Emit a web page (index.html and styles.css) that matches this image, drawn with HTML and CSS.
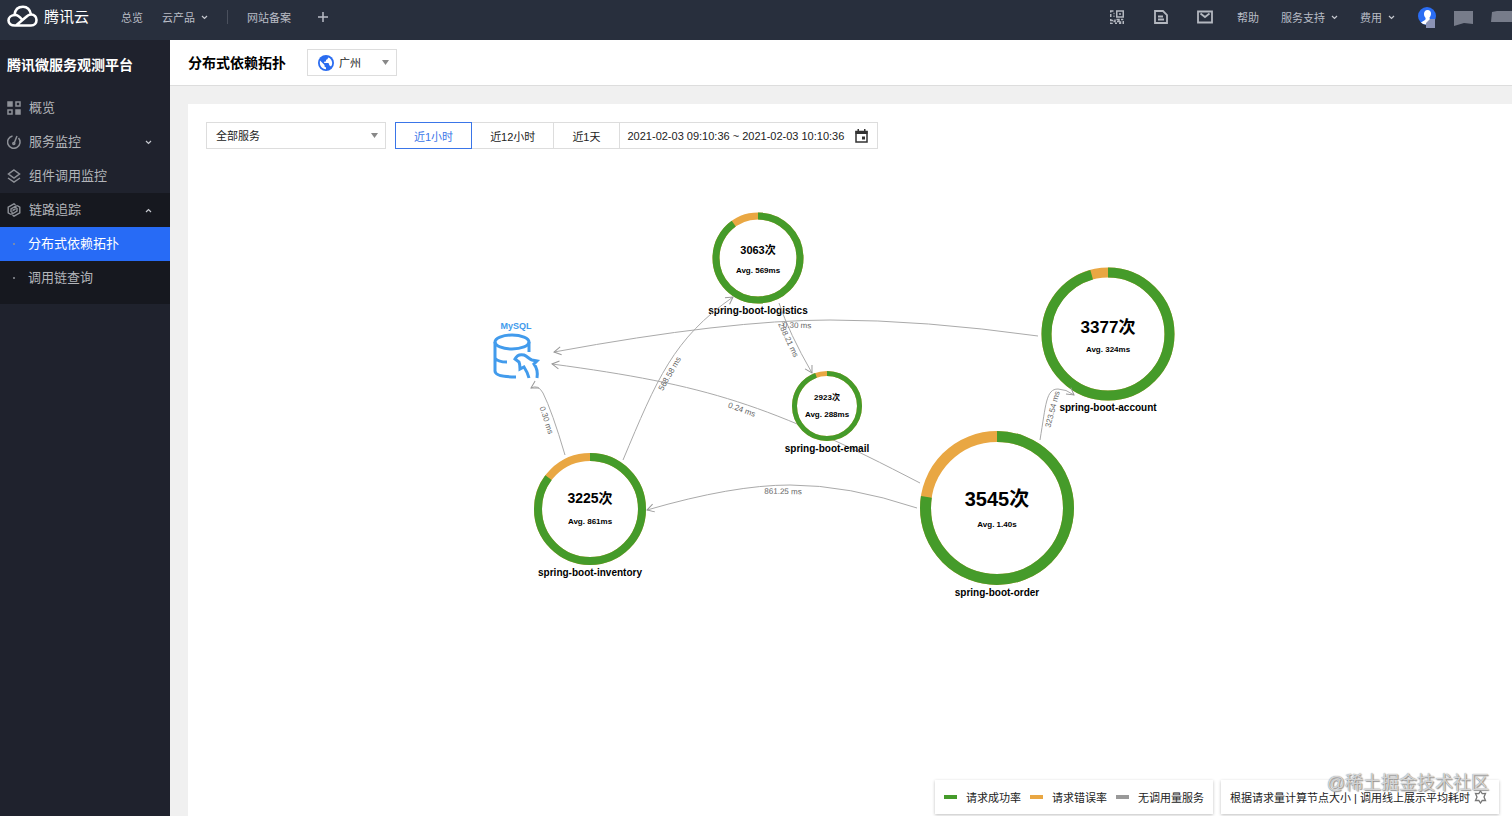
FILE: index.html
```
<!DOCTYPE html>
<html lang="zh-CN">
  <head>
    <meta charset="UTF-8" />
    <meta name="viewport" content="width=device-width, initial-scale=1.0" />
    <title>分布式依赖拓扑</title>
    <link rel="stylesheet" href="styles.css" />
  </head>
  <body>
    <header class="topbar">
      <a href="#" class="logo">
        <svg width="31" height="24" viewBox="0 0 31 24" fill="none" stroke="#fff" stroke-width="2.600">
          <path d="M15 14.500C12 11 10.500 10 8.500 10 4 10 1.500 12.500 1.500 15.500s2.500 5 6.500 5h16c3.500 0 5.500-2.500 5.500-5.500s-2-5.500-5.500-5.500c-2 0-3.500 1-5 2.500L9 20.500" />
          <path d="M7.500 10C8 5 11 1.700 16 1.700c4 0 7 2.500 8 7.800" />
        </svg>
        <span>腾讯云</span>
      </a>
      <nav class="topnav">
        <a href="#">总览</a>
        <a href="#">云产品
          <svg class="caret" width="7" height="5" viewBox="0 0 7 5"><path d="M1 1l2.500 2.500L6 1" /></svg>
        </a>
        <span class="divider"></span>
        <a href="#">网站备案</a>
        <button class="plus" aria-label="添加">
          <svg width="10" height="10" viewBox="0 0 10 10"><path d="M5 0v10M0 5h10" /></svg>
        </button>
      </nav>
      <div class="tools">
        <button aria-label="二维码">
          <svg width="14" height="14" viewBox="0 0 14 14" fill="none" stroke="#b4b8c0" stroke-width="1.500">
            <path d="M6.750 1h6.500v6h-6.500zM9 4h2M3.500 1H.75v1.500M.75 4v3M3.500 6.250h1M3.500 3.500h1M.75 9v1.500h2.500M.75 12.500v1h2M5 9.500v2H3.500M6.500 9.500h2.500v2h-2M5 13.250h2M9 13.250h1.500v-2M11 9.500h2.250M13.250 11v3" />
          </svg>
        </button>
        <button aria-label="文档">
          <svg width="14" height="14" viewBox="0 0 14 14" fill="none" stroke="#b4b8c0" stroke-width="1.800">
            <path d="M1 1h8l4 4v8H1zM4 6.500h5M4 9.500h6" />
          </svg>
        </button>
        <button aria-label="消息">
          <svg width="16" height="14" viewBox="0 0 16 14" fill="none" stroke="#b4b8c0" stroke-width="1.800">
            <path d="M1 1.500h14v11H1zM3.500 3.500L8 7l4.500-3.500" />
          </svg>
        </button>
        <a href="#" class="help">帮助</a>
        <a href="#">服务支持
          <svg class="caret" width="7" height="5" viewBox="0 0 7 5"><path d="M1 1l2.500 2.500L6 1" /></svg>
        </a>
        <a href="#">费用
          <svg class="caret" width="7" height="5" viewBox="0 0 7 5"><path d="M1 1l2.500 2.500L6 1" /></svg>
        </a>
        <button aria-label="账号">
          <svg width="20" height="22" viewBox="0 0 20 22">
            <circle cx="10" cy="10" r="9" fill="#2b6df3" />
            <path d="M10.500 4c2.500 0 3.700 1.800 3.500 4-.2 1.800-1 2.800-1.500 3.500L13 14l-4 4.500c-2 0-4-.8-5-2l4-2.500c.8-.5.8-1.500.3-2.500C7.500 10.500 7 9.500 7 8c0-2.200 1.200-4 3.500-4z" fill="#fff" />
            <path d="M9 17l4-4h5v9H9z" fill="#8b93b5" />
          </svg>
        </button>
        <svg class="mask" width="20" height="17" viewBox="0 0 20 17"><path d="M0 2h19v13l-9-1-10 3z" /></svg>
        <svg class="mask" width="21" height="14" viewBox="0 0 21 14"><path d="M1 2l5-1h15v11H0z" /></svg>
      </div>
    </header>

    <div class="layout">
      <aside class="sidebar">
        <h2>腾讯微服务观测平台</h2>
        <nav>
          <a href="#" class="item">
            <svg width="14" height="14" viewBox="0 0 14 14" fill="none" stroke="#8e9198" stroke-width="1.500">
              <path d="M1 1h4v4H1zM9 9h4v4H9z" fill="#8e9198" /><path d="M9 1h4v4H9zM1 9h4v4H1z" />
            </svg>
            <span>概览</span>
          </a>
          <button class="item">
            <svg width="14" height="14" viewBox="0 0 14 14" fill="none" stroke="#8e9198" stroke-width="1.500">
              <path d="M5.500 1A6.200 6.200 0 1 0 11.500 3" /><path d="M10 1L7 8.500" /><circle cx="6.800" cy="8.500" r="1" />
            </svg>
            <span>服务监控</span>
            <svg class="caret" width="7" height="5" viewBox="0 0 7 5"><path d="M1 1l2.500 2.500L6 1" /></svg>
          </button>
          <a href="#" class="item">
            <svg width="14" height="14" viewBox="0 0 14 14" fill="none" stroke="#8e9198" stroke-width="1.500">
              <path d="M7 1l5.500 4L7 9 1.500 5zM1 9l6 4 6-4" />
            </svg>
            <span>组件调用监控</span>
          </a>
          <div class="group">
            <button class="item">
              <svg width="14" height="14" viewBox="0 0 14 14" fill="none" stroke="#8e9198" stroke-width="1.400">
                <path d="M4 11.500L1.200 9.800V4.200L7 .9l1.500.9M10 2.500l2.800 1.700v5.600L7 13.100l-1.500-.9" />
                <path d="M4 9V6l5-3v2.500M10 5v3l-5 3V8.500M5.500 7.500l3-1.500" />
              </svg>
              <span>链路追踪</span>
              <svg class="caret" width="7" height="5" viewBox="0 0 7 5"><path d="M1 4l2.500-2.500L6 4" /></svg>
            </button>
            <a href="#" class="item sub active"><span>分布式依赖拓扑</span></a>
            <a href="#" class="item sub"><span>调用链查询</span></a>
          </div>
        </nav>
      </aside>

      <main>
        <div class="titlebar">
          <h1>分布式依赖拓扑</h1>
          <label class="region">
            <svg width="16" height="16" viewBox="0 0 16 16">
              <circle cx="8" cy="8" r="8" fill="#2a6cf0" />
              <path d="M2 5.500l4.500 4.500v1.500l1.500 1v1.700C4 14 1 10.500 2 5.500zM6 2.500h4c0 1.500-1 2-2 2.500v1.500H6.500L6 8h4.500l1 2.500 1.500 1c2-2.500 1.500-6-1.500-8.500L10 2.500" fill="#fff" />
            </svg>
            <select aria-label="地域">
              <option>广州</option>
            </select>
          </label>
        </div>

        <section class="card">
          <div class="filters">
            <select class="service" aria-label="服务">
              <option>全部服务</option>
            </select>
            <div class="range">
              <button class="valgt">近1小时</button>
              <button>近12小时</button>
              <button>近1天</button>
              <button class="date">
                2021-02-03 09:10:36 ~ 2021-02-03 10:10:36
                <svg width="13" height="14" viewBox="0 0 13 14">
                  <path d="M1 2.500h11v10.500H1z" fill="none" stroke="#333" stroke-width="1.500" />
                  <path d="M.5 2h12v3H.5zM2.500 0h1.500v2H2.500zM9 0h1.500v2H9zM7 7.500h3v3H7z" fill="#333" />
                </svg>
              </button>
            </div>
          </div>

          <svg class="topology" viewBox="0 0 1324 667" preserveAspectRatio="xMidYMin meet">
            <defs>
              <marker id="arrow" viewBox="-9 -5 10 10" markerWidth="10" markerHeight="10" markerUnits="userSpaceOnUse" orient="auto">
                <path d="M-7 -4L0 0L-7 4" />
              </marker>
            </defs>

            <g class="node" transform="translate(570 109)">
              <circle class="err" r="42" stroke-width="7" />
              <circle class="ok" r="42" stroke-width="7" pathLength="100" stroke-dasharray="90.200 100" />
              <text y="-4" font-size="11">3063次</text>
              <text y="15" font-size="8">Avg. 569ms</text>
              <text y="56" font-size="10">spring-boot-logistics</text>
            </g>
            <g class="node" transform="translate(920 185)">
              <circle class="err" r="61.500" stroke-width="10" />
              <circle class="ok" r="61.500" stroke-width="10" pathLength="100" stroke-dasharray="95.700 100" />
              <text y="-1" font-size="17">3377次</text>
              <text y="18" font-size="8">Avg. 324ms</text>
              <text y="77" font-size="10">spring-boot-account</text>
            </g>
            <g class="node" transform="translate(402 360)">
              <circle class="err" r="52" stroke-width="8" />
              <circle class="ok" r="52" stroke-width="8" pathLength="100" stroke-dasharray="85.300 100" />
              <text y="-6" font-size="14">3225次</text>
              <text y="15" font-size="8">Avg. 861ms</text>
              <text y="67" font-size="10">spring-boot-inventory</text>
            </g>
            <g class="node" transform="translate(809 359)">
              <circle class="err" r="71.500" stroke-width="11" />
              <circle class="ok" r="71.500" stroke-width="11" pathLength="100" stroke-dasharray="77.500 100" />
              <text y="-2" font-size="20">3545次</text>
              <text y="19" font-size="8">Avg. 1.40s</text>
              <text y="88" font-size="10">spring-boot-order</text>
            </g>

            <g class="edges">
              <path d="M850 187Q735 171 642 171Q540 171 366 203" />
              <path d="M732 334C580 255 520 236 364 215" />
              <path d="M729 359Q660 336 602 336Q545 336 459 361" />
              <path d="M377 306Q364 262 355 244Q350 235 343 239" />
              <path d="M435 311C469 230 485 190 545 148" />
              <path d="M591 154Q601 184 624 224" />
              <path d="M852 291C858 255 858 240 870 240Q878 240 886 246" />
            </g>

            <g class="node" transform="translate(639 257)">
              <circle class="bg" r="32" />
              <circle class="err" r="32.500" stroke-width="5" />
              <circle class="ok" r="32.500" stroke-width="5" pathLength="100" stroke-dasharray="94.500 100" />
              <text y="-6" font-size="8">2923次</text>
              <text y="11" font-size="8">Avg. 288ms</text>
              <text y="46" font-size="10">spring-boot-email</text>
            </g>

            <g class="cost">
              <text transform="translate(609 179) rotate(1)">0.30 ms</text>
              <text transform="translate(598 192) rotate(65)">288.21 ms</text>
              <text transform="translate(484 226) rotate(-60)">568.58 ms</text>
              <text transform="translate(553 263) rotate(20)">0.24 ms</text>
              <text transform="translate(356 272) rotate(72)">0.30 ms</text>
              <text transform="translate(595 345) rotate(1)">861.25 ms</text>
              <text transform="translate(867 261) rotate(-75)">323.54 ms</text>
            </g>

            <g class="mysql" transform="translate(305 185)">
              <text x="23" y="-5" font-size="9">MySQL</text>
              <ellipse cx="19" cy="8" rx="17" ry="7" />
              <path d="M2 8v29c0 4 8 6 21 6M36 8v10M2 24c2 3 6 4 12 4" />
              <path d="M36 44c-1-4-3-8-5-11l-4 2c0-3 0-5-1-7l-4-3c2-4 5-5 9-4 3 1 5 4 8 5l5 1-3 3c3 4 4 8 3 14" />
            </g>
          </svg>

          <div class="legends">
            <ul class="legend">
              <li class="success">请求成功率</li>
              <li class="error">请求错误率</li>
              <li class="none">无调用量服务</li>
            </ul>
            <div class="legend tips">
              根据请求量计算节点大小 | 调用线上展示平均耗时
              <button aria-label="设置">
                <svg width="13" height="14" viewBox="0 0 13 14" fill="none" stroke="#777" stroke-width="1.300">
                  <path d="M6.500 1l1.700 2.700 3.300-.2L10 7l1.500 3.500-3.300-.2L6.500 13l-1.700-2.700-3.300.2L3 7 1.500 3.500l3.300.2z" />
                </svg>
              </button>
            </div>
          </div>
          <div class="watermark">@稀土掘金技术社区</div>
        </section>
      </main>
    </div>
  </body>
</html>
```
FILE: styles.css
```
* {
  box-sizing: border-box;
}
body {
  margin: 0;
  height: 100vh;
  display: flex;
  flex-direction: column;
  font-family: "Liberation Sans", "Noto Sans CJK SC", sans-serif;
  font-size: 11px;
  color: #222;
  background-color: #f0f0f0;
  overflow: hidden;
}
h1,
h2,
ul {
  margin: 0;
  padding: 0;
}
a {
  color: inherit;
  text-decoration: none;
}
button,
select {
  font: inherit;
  color: inherit;
  background: none;
  border: 0;
  padding: 0;
  cursor: pointer;
}
svg {
  flex-shrink: 0;
}

/* top bar */
.topbar {
  height: 40px;
  flex-shrink: 0;
  display: flex;
  align-items: center;
  padding: 0 0 6px 7px;
  background-color: #282f3d;
  color: #b9bdc6;
  white-space: nowrap;
}
.topbar a,
.topbar button {
  display: flex;
  align-items: center;
}
.topbar a {
  gap: 6px;
}
.logo {
  font-size: 15px;
  line-height: 20px;
  color: #fff;
}
.topnav {
  display: flex;
  align-items: center;
  gap: 19px;
  margin-left: 32px;
}
.divider {
  width: 1px;
  height: 14px;
  background-color: #4a505d;
}
.caret path {
  fill: none;
  stroke: #c5c8cf;
  stroke-width: 1.2;
}
.plus {
  margin-left: 8px;
}
.plus path {
  stroke: #b9bdc6;
  stroke-width: 1.5;
}
.tools {
  display: flex;
  align-items: center;
  gap: 24px;
  margin-left: auto;
}
.tools button {
  justify-content: center;
  min-width: 20px;
}
.tools .help {
  margin-left: -2px;
}
.tools a + a {
  margin-left: -2px;
}
.tools a + button {
  margin-left: -2px;
}
.mask {
  margin-left: -7px;
  fill: #777c8a;
}

/* side menu */
.layout {
  flex: 1;
  display: flex;
  min-height: 0;
}
.sidebar {
  width: 170px;
  flex-shrink: 0;
  background-color: #1f222d;
  color: #b3b5ba;
}
.sidebar h2 {
  padding: 0 7px;
  font-size: 14px;
  line-height: 51px;
  color: #fff;
}
.item {
  width: 100%;
  height: 34px;
  display: flex;
  align-items: center;
  gap: 8px;
  padding: 0 18px 0 7px;
  font-size: 13px;
}
.item span {
  padding-bottom: 3px;
}
.item .caret {
  margin-left: auto;
}
.group {
  padding-bottom: 9px;
  background-color: #16181f;
}
.sub::before {
  content: "";
  width: 2px;
  height: 2px;
  margin: 0 5px 0 6px;
  border-radius: 50%;
  background-color: #90939a;
}
.sub.active {
  color: #fff;
  background-color: #276bf6;
}

main {
  flex: 1;
  min-width: 0;
  display: flex;
  flex-direction: column;
}
.titlebar {
  height: 46px;
  flex-shrink: 0;
  display: flex;
  align-items: center;
  gap: 21px;
  padding-left: 18px;
  background-color: #fff;
  border-bottom: 1px solid #ddd;
}
h1 {
  padding-bottom: 2px;
  font-size: 14px;
  color: #000;
}
select {
  appearance: none;
  background: url("data:image/svg+xml,%3Csvg xmlns='http://www.w3.org/2000/svg' width='7' height='5'%3E%3Cpath d='M0 0h7L3.5 5z' fill='%23888'/%3E%3C/svg%3E")
    no-repeat right 7px center;
}
.region {
  width: 90px;
  height: 27px;
  display: flex;
  align-items: center;
  gap: 5px;
  padding-left: 10px;
  border: 1px solid #ddd;
}
.region select {
  flex: 1;
  height: 25px;
}

/* filters + graph */
.card {
  position: relative;
  flex: 1;
  min-height: 0;
  display: flex;
  flex-direction: column;
  margin: 18px 0 0 18px;
  background-color: #fff;
}
.filters {
  display: flex;
  gap: 9px;
  padding: 18px 18px 0;
}
.service {
  width: 180px;
  height: 27px;
  padding-left: 9px;
  border: 1px solid #ddd;
}
.range {
  display: flex;
}
.range button {
  height: 27px;
  padding: 0 18px;
  border: 1px solid #ddd;
  border-left: 0;
}
.range .valgt {
  color: #3a75e8;
  border: 1px solid #3a75e8;
}
.range .date {
  display: flex;
  align-items: center;
  gap: 11px;
  padding: 0 9px 0 8px;
}
.topology {
  flex: 1;
  width: 100%;
  min-height: 0;
}
.topology text {
  text-anchor: middle;
}
.node text {
  font-weight: bold;
  fill: #000;
}
.node circle {
  fill: none;
}
.node .bg {
  fill: #fff;
}
.err {
  stroke: #e9a743;
}
.ok {
  stroke: #459b2a;
  transform: rotate(-90deg);
}
.edges path {
  fill: none;
  stroke: #aaa;
  marker-end: url(#arrow);
}
marker path {
  fill: none;
  stroke: #999;
}
.cost text {
  font-size: 8px;
  fill: #666;
}
.mysql {
  fill: none;
  stroke: #429bec;
  stroke-width: 3;
}
.mysql text {
  font-weight: bold;
  fill: #429bec;
  stroke: none;
}

.legends {
  position: absolute;
  right: 13px;
  bottom: 2px;
  display: flex;
  gap: 8px;
}
.legend {
  height: 34px;
  display: flex;
  align-items: center;
  gap: 9px;
  padding: 0 9px;
  list-style: none;
  background-color: #fff;
  box-shadow: 0 1px 3px rgba(0, 0, 0, 0.25);
  white-space: nowrap;
}
.tips {
  gap: 4px;
  padding-right: 12px;
}
.legend li {
  display: flex;
  align-items: center;
  gap: 9px;
}
.legend li::before {
  content: "";
  width: 13px;
  height: 4px;
  background-color: #999;
}
.legend .success::before {
  background-color: #459b2a;
}
.legend .error::before {
  background-color: #e9a743;
}
.legend button {
  display: flex;
}
.watermark {
  position: absolute;
  right: 23px;
  bottom: 20px;
  font-size: 18px;
  line-height: 26px;
  color: rgba(255, 255, 255, 0.7);
  text-shadow: 0 0 1px #666, 1px 1px 1px #999;
  pointer-events: none;
}
```
